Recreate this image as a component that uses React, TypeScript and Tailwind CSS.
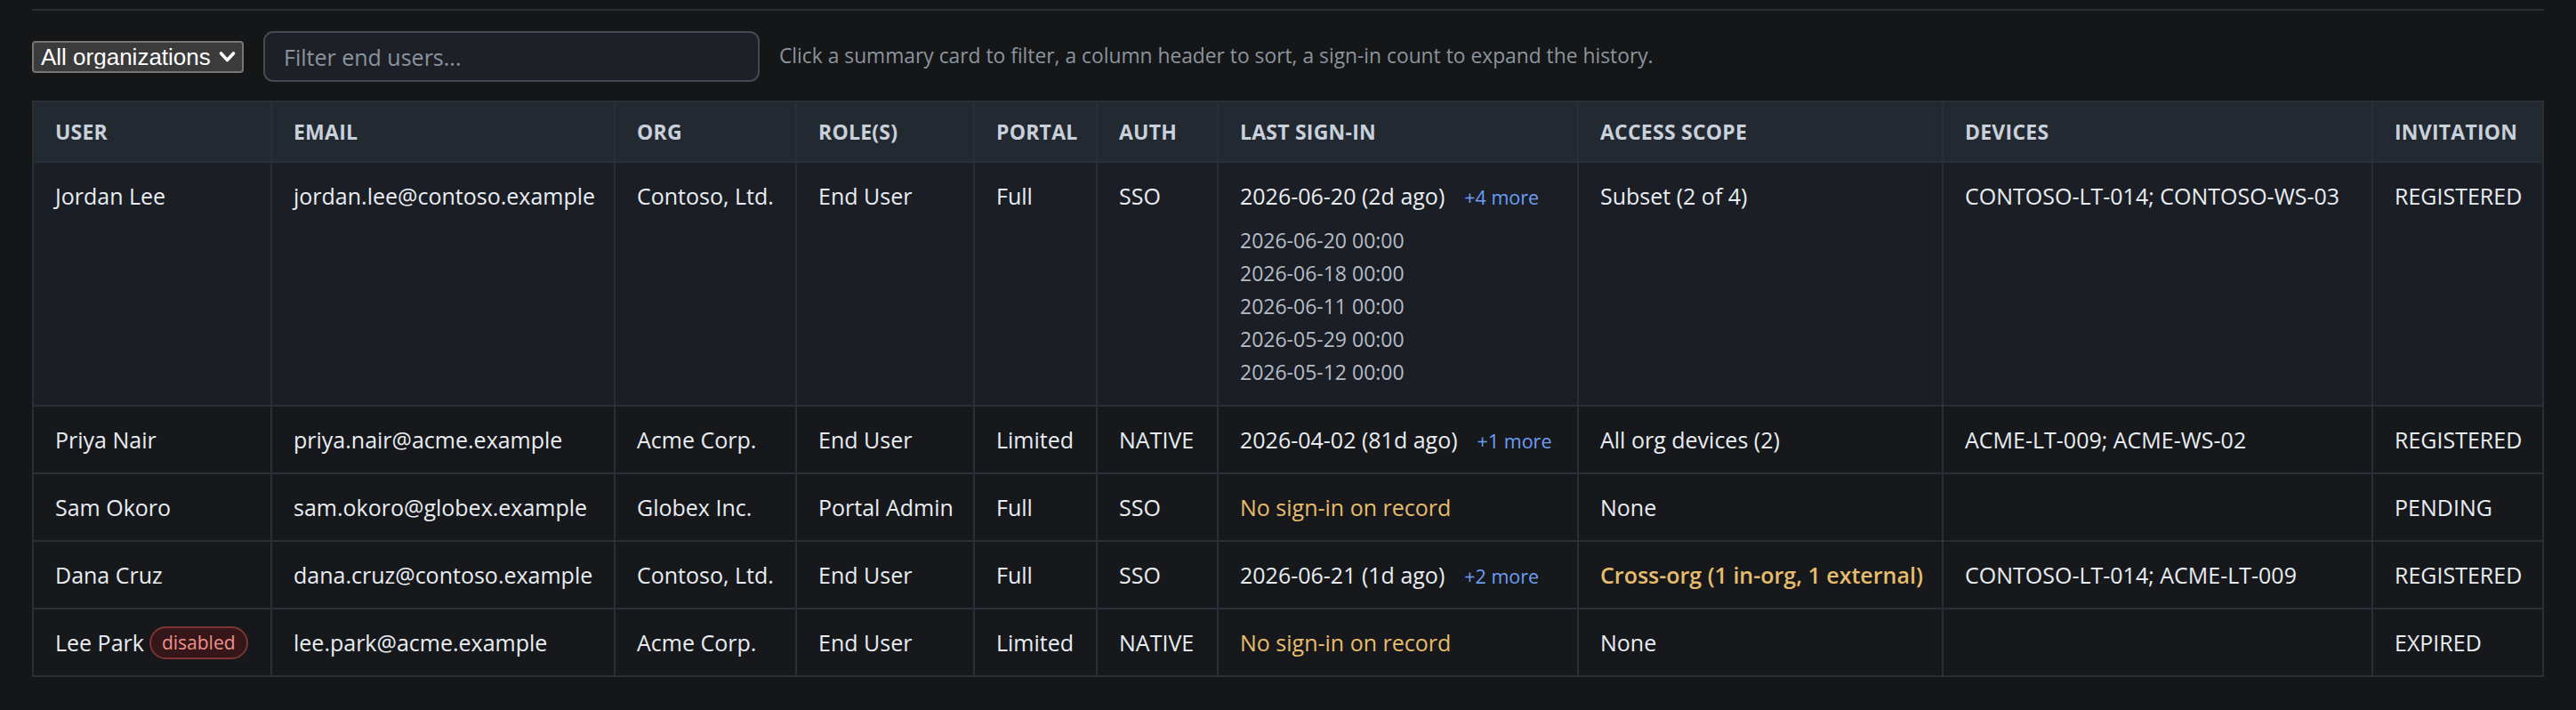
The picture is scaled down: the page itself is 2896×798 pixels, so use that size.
import { useState } from 'react'

type EndUser = {
  name: string
  disabled?: boolean
  email: string
  org: string
  role: string
  portal: string
  auth: string
  lastSignIn: string | null
  more: number
  history: string[]
  scope: string
  scopeWarn?: boolean
  devices: string
  invitation: string
}

const users: EndUser[] = [
  {
    name: 'Jordan Lee',
    email: 'jordan.lee@contoso.example',
    org: 'Contoso, Ltd.',
    role: 'End User',
    portal: 'Full',
    auth: 'SSO',
    lastSignIn: '2026-06-20 (2d ago)',
    more: 4,
    history: [
      '2026-06-20 00:00',
      '2026-06-18 00:00',
      '2026-06-11 00:00',
      '2026-05-29 00:00',
      '2026-05-12 00:00',
    ],
    scope: 'Subset (2 of 4)',
    devices: 'CONTOSO-LT-014; CONTOSO-WS-03',
    invitation: 'REGISTERED',
  },
  {
    name: 'Priya Nair',
    email: 'priya.nair@acme.example',
    org: 'Acme Corp.',
    role: 'End User',
    portal: 'Limited',
    auth: 'NATIVE',
    lastSignIn: '2026-04-02 (81d ago)',
    more: 1,
    history: [],
    scope: 'All org devices (2)',
    devices: 'ACME-LT-009; ACME-WS-02',
    invitation: 'REGISTERED',
  },
  {
    name: 'Sam Okoro',
    email: 'sam.okoro@globex.example',
    org: 'Globex Inc.',
    role: 'Portal Admin',
    portal: 'Full',
    auth: 'SSO',
    lastSignIn: null,
    more: 0,
    history: [],
    scope: 'None',
    devices: '',
    invitation: 'PENDING',
  },
  {
    name: 'Dana Cruz',
    email: 'dana.cruz@contoso.example',
    org: 'Contoso, Ltd.',
    role: 'End User',
    portal: 'Full',
    auth: 'SSO',
    lastSignIn: '2026-06-21 (1d ago)',
    more: 2,
    history: [],
    scope: 'Cross-org (1 in-org, 1 external)',
    scopeWarn: true,
    devices: 'CONTOSO-LT-014; ACME-LT-009',
    invitation: 'REGISTERED',
  },
  {
    name: 'Lee Park',
    disabled: true,
    email: 'lee.park@acme.example',
    org: 'Acme Corp.',
    role: 'End User',
    portal: 'Limited',
    auth: 'NATIVE',
    lastSignIn: null,
    more: 0,
    history: [],
    scope: 'None',
    devices: '',
    invitation: 'EXPIRED',
  },
]

const columns = [
  { label: 'User', width: 268 },
  { label: 'Email', width: 386 },
  { label: 'Org', width: 204 },
  { label: 'Role(s)', width: 200 },
  { label: 'Portal', width: 138 },
  { label: 'Auth', width: 136 },
  { label: 'Last Sign-in', width: 405 },
  { label: 'Access Scope', width: 410 },
  { label: 'Devices', width: 483 },
  { label: 'Invitation', width: 192 },
]

const cell =
  'border-2 border-[#2a2f37] px-[24px] py-[18px] align-top leading-[38px] whitespace-nowrap'

export default function App() {
  const [expanded, setExpanded] = useState<string | null>('Jordan Lee')
  const [query, setQuery] = useState('')

  return (
    <div className="min-h-screen bg-[#151618] px-[36px] pt-[10px] pb-[30px] font-['Open_Sans',sans-serif] text-[#e8edf2]">
      <div className="border-t-2 border-[#2a2f37]" />

      {/* Toolbar */}
      <div className="mt-[23px] flex items-center gap-[22px]">
        <div className="relative">
          <select className="h-[36px] w-[238px] appearance-none rounded-[4px] border-2 border-[#767676] bg-[#3b3b3b] pl-[8px] pr-[34px] font-['Liberation_Sans',Arial,sans-serif] text-[26px] leading-none text-white">
            <option>All organizations</option>
            <option>Contoso, Ltd.</option>
            <option>Acme Corp.</option>
            <option>Globex Inc.</option>
          </select>
          <svg
            className="pointer-events-none absolute right-[9px] top-[11px] h-[14px] w-[19px]"
            viewBox="0 0 19 14"
            fill="none"
            stroke="white"
            strokeWidth="3.6"
            strokeLinecap="round"
            strokeLinejoin="round"
          >
            <polyline points="2.5,3 9.5,10.5 16.5,3" />
          </svg>
        </div>
        <input
          value={query}
          onChange={(e) => setQuery(e.target.value)}
          placeholder="Filter end users..."
          className="h-[57px] w-[558px] rounded-[11px] border-2 border-[#434a54] bg-[#1d2127] px-[21px] text-[25px] text-[#e6edf3] outline-none placeholder:text-[#8b949e]"
        />
        <p className="text-[22.8px] text-[#8b949e]">
          Click a summary card to filter, a column header to sort, a sign-in count to expand the history.
        </p>
      </div>

      {/* Users table */}
      <table className="mt-[21px] w-[2822px] table-fixed border-collapse border-2 border-[#2a2f37] text-[25px]">
        <colgroup>
          {columns.map((c) => (
            <col key={c.label} style={{ width: c.width }} />
          ))}
        </colgroup>
        <thead>
          <tr className="bg-[#232931]">
            {columns.map((c) => (
              <th
                key={c.label}
                className="border-2 border-[#2a2f37] px-[24px] py-[15px] text-left text-[23px] font-bold uppercase leading-[36px] tracking-[0.01em] whitespace-nowrap text-[#c8d1db]"
              >
                {c.label}
              </th>
            ))}
          </tr>
        </thead>
        <tbody>
          {users.map((u) => {
            const isOpen = expanded === u.name && u.history.length > 0
            return (
              <tr key={u.email} className={isOpen ? 'bg-[#1b1e25]' : 'bg-[#17181b]'}>
                <td className={cell}>
                  <div className="flex h-[38px] items-center gap-[6px]">
                    <span>{u.name}</span>
                    {u.disabled && (
                      <span className="rounded-full border-2 border-[#7c3434] bg-[#351719] px-[12px] text-[21px] leading-[33px] text-[#f0908a]">
                        disabled
                      </span>
                    )}
                  </div>
                </td>
                <td className={cell}>{u.email}</td>
                <td className={cell}>{u.org}</td>
                <td className={cell}>{u.role}</td>
                <td className={cell}>{u.portal}</td>
                <td className={cell}>{u.auth}</td>
                <td className={cell}>
                  {u.lastSignIn ? (
                    <>
                      <div className="flex h-[38px] items-baseline gap-[22px]">
                        <span>{u.lastSignIn}</span>
                        <button
                          onClick={() => setExpanded(expanded === u.name ? null : u.name)}
                          className="text-[21.5px] leading-none text-[#6c9ef6]"
                        >
                          +{u.more} more
                        </button>
                      </div>
                      {isOpen && (
                        <div className="mt-[13px] text-[23px] leading-[37px] text-[#b4bcc6]">
                          {u.history.map((h) => (
                            <div key={h}>{h}</div>
                          ))}
                        </div>
                      )}
                    </>
                  ) : (
                    <span className="text-[#e6bd6c]">No sign-in on record</span>
                  )}
                </td>
                <td className={cell}>
                  <span className={u.scopeWarn ? 'font-semibold text-[#e6bd6c]' : ''}>{u.scope}</span>
                </td>
                <td className={cell}>{u.devices}</td>
                <td className={cell}>{u.invitation}</td>
              </tr>
            )
          })}
        </tbody>
      </table>
    </div>
  )
}
